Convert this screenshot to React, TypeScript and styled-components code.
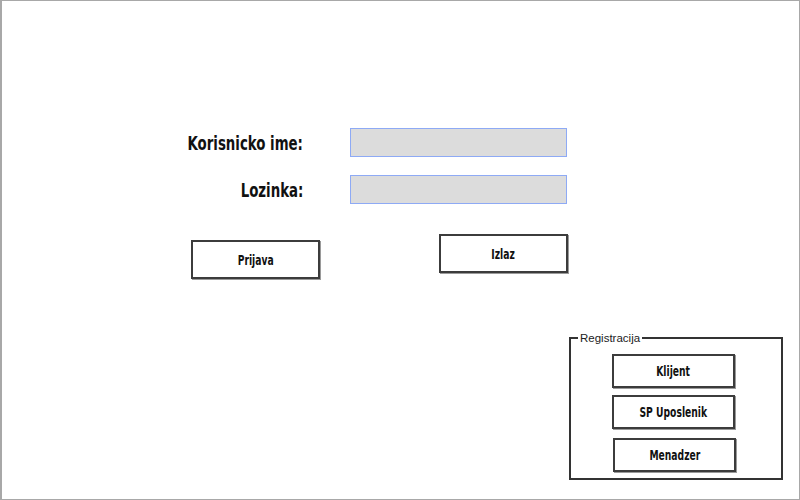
import React from "react";
import styled, { createGlobalStyle } from "styled-components";

const Global = createGlobalStyle`
  html, body { margin: 0; padding: 0; background: #fff; }
  * { box-sizing: border-box; }
`;

const Frame = styled.div`
  width: 800px;
  height: 500px;
  border: 1px solid #a8a8a8;
  border-left-width: 2px;
  display: flex;
  flex-direction: column;
  font-family: "DejaVu Sans Condensed", "Liberation Sans", sans-serif;
  color: #111;
`;

const FormGrid = styled.div`
  margin-top: 127px;
  display: grid;
  grid-template-columns: 301px 217px;
  column-gap: 47px;
  row-gap: 18px;
  align-items: center;
`;

const Label = styled.label`
  justify-self: end;
  font-size: 19px;
  font-weight: 700;
  transform: scaleX(0.78);
  transform-origin: right center;
`;

const Input = styled.div`
  height: 29px;
  background: #dcdcdc;
  border: 1px solid #8eaaf5;
`;

const ButtonRow = styled.div`
  margin-top: 30px;
  padding-left: 189px;
  display: flex;
  align-items: flex-start;
  gap: 119px;
`;

const Button = styled.button<{ $w: number; $h: number; $dy?: number; $dx?: number }>`
  width: ${(p) => p.$w}px;
  height: ${(p) => p.$h}px;
  margin-top: ${(p) => p.$dy ?? 0}px;
  margin-left: ${(p) => p.$dx ?? 0}px;
  padding: 0;
  background: #fff;
  border: 2px solid #3c3c3c;
  box-shadow: 1px 1px 0 #9a9a9a;
  font-family: inherit;
  font-size: 14px;
  font-weight: 700;
  color: #111;
  display: flex;
  align-items: center;
  justify-content: center;
`;

const Caption = styled.span`
  display: inline-block;
  transform: scaleX(0.73);
  white-space: nowrap;
`;

const Group = styled.fieldset`
  margin: auto 16px 19px auto;
  width: 214px;
  height: 148px;
  padding: 0;
  border: 2px solid #333;
`;

const Legend = styled.legend`
  margin-left: 7px;
  padding: 0 2px;
  font-family: "Liberation Sans", Arial, sans-serif;
  font-size: 11.5px;
  font-weight: 400;
  color: #222;
  line-height: 12px;
`;

const Stack = styled.div`
  padding: 10px 0 0 41px;
  display: flex;
  flex-direction: column;
  align-items: flex-start;
  gap: 7px;
`;

export default function App() {
  return (
    <>
      <Global />
      <Frame>
        <FormGrid>
          <Label>Korisnicko ime:</Label>
          <Input />
          <Label>Lozinka:</Label>
          <Input />
        </FormGrid>
        <ButtonRow>
          <Button $w={129} $h={39} $dy={6}><Caption>Prijava</Caption></Button>
          <Button $w={129} $h={39}><Caption>Izlaz</Caption></Button>
        </ButtonRow>
        <Group>
          <Legend>Registracija</Legend>
          <Stack>
            <Button $w={123} $h={34}><Caption>Klijent</Caption></Button>
            <Button $w={123} $h={34}><Caption>SP Uposlenik</Caption></Button>
            <Button $w={123} $h={34} $dy={2} $dx={1}><Caption>Menadzer</Caption></Button>
          </Stack>
        </Group>
      </Frame>
    </>
  );
}
